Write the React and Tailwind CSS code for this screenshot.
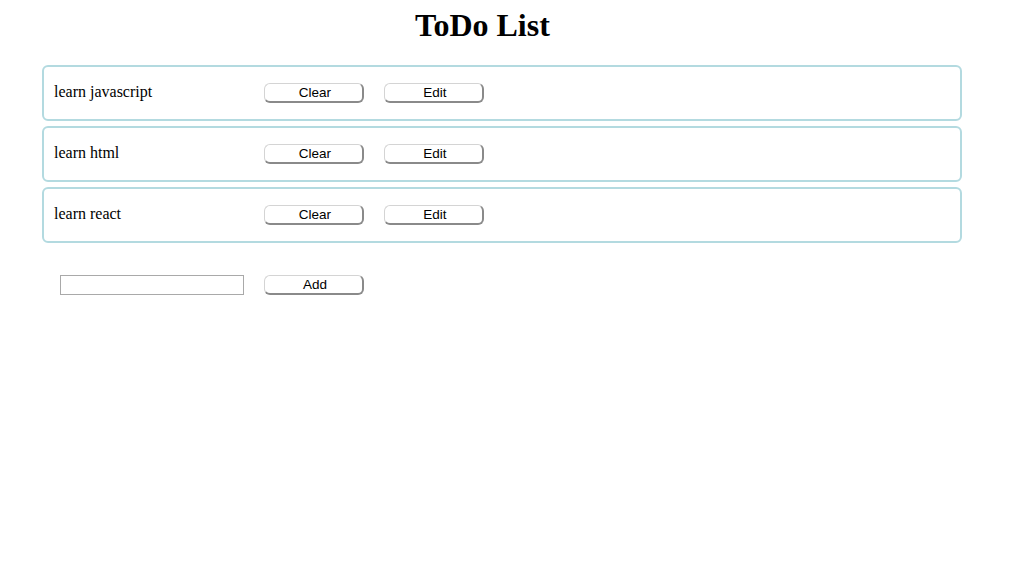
const todos = ['learn javascript', 'learn html', 'learn react'];

function Btn({ children }) {
  return (
    <button className="w-[100px] h-[20px] pl-[3px] pt-[1px] rounded-[6px] border border-[#d4d4d4] border-r-2 border-b-2 border-r-[#8a8a8a] border-b-[#8a8a8a] bg-white text-[13.5px] leading-none text-black font-['Liberation_Sans',Arial,sans-serif]">
      {children}
    </button>
  );
}

export default function App() {
  return (
    <div className="min-h-screen w-full bg-white font-['Liberation_Serif','Times_New_Roman',serif] text-black">
      <h1 className="pt-[7px] pl-[415px] text-[32px] font-bold leading-[37px]">ToDo List</h1>

      <div className="mt-[21px] ml-[42px] w-[920px] flex flex-col gap-[5px]">
        {todos.map((t) => (
          <div
            key={t}
            className="h-[56px] flex items-center border-2 border-[#b3dae0] rounded-[6px] pl-[10px]"
          >
            <span className="w-[210px] text-[16px] -mt-[2px]">{t}</span>
            <div className="flex gap-[20px]">
              <Btn>Clear</Btn>
              <Btn>Edit</Btn>
            </div>
          </div>
        ))}
      </div>

      <div className="mt-[32px] ml-[60px] flex items-center gap-[20px]">
        <input className="w-[184px] h-[20px] border border-[#a9a9a9] outline-none" />
        <Btn>Add</Btn>
      </div>
    </div>
  );
}
